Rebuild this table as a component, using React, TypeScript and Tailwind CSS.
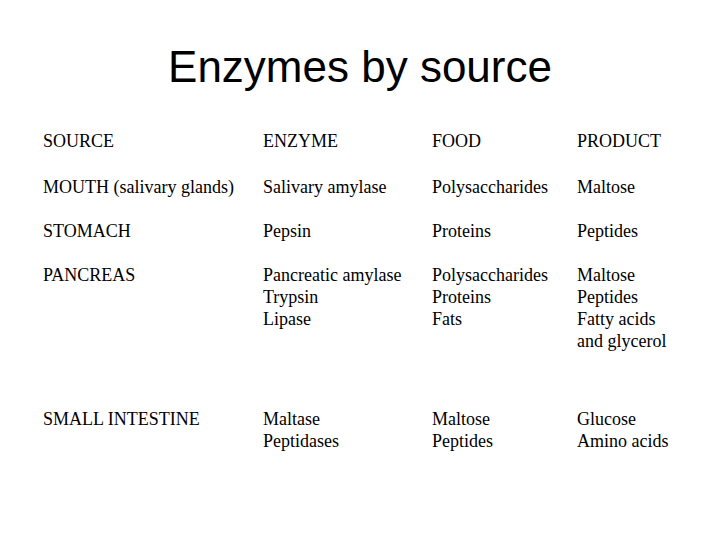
const rows: { h: string; cells: string[][] }[] = [
  { h: "h-[46px]", cells: [["SOURCE"], ["ENZYME"], ["FOOD"], ["PRODUCT"]] },
  { h: "h-[44px]", cells: [["MOUTH (salivary glands)"], ["Salivary amylase"], ["Polysaccharides"], ["Maltose"]] },
  { h: "h-[44px]", cells: [["STOMACH"], ["Pepsin"], ["Proteins"], ["Peptides"]] },
  {
    h: "h-[144px]",
    cells: [
      ["PANCREAS"],
      ["Pancreatic amylase", "Trypsin", "Lipase"],
      ["Polysaccharides", "Proteins", "Fats"],
      ["Maltose", "Peptides", "Fatty acids", "and glycerol"],
    ],
  },
  {
    h: "h-[66px]",
    cells: [["SMALL INTESTINE"], ["Maltase", "Peptidases"], ["Maltose", "Peptides"], ["Glucose", "Amino acids"]],
  },
];

export default function App() {
  return (
    <div className="w-[720px] h-[540px] bg-white text-black overflow-hidden">
      <h1 className="pt-[45px] text-center text-[44px] leading-[44px] font-['Liberation_Sans',Arial,sans-serif]">
        Enzymes by source
      </h1>
      <div className="mt-[41px] pl-[43px] font-['Liberation_Serif','Times_New_Roman',serif] text-[18px] leading-[22px]">
        {rows.map((row, i) => (
          <div key={i} className={`grid grid-cols-[220px_169px_145px_1fr] ${row.h}`}>
            {row.cells.map((lines, j) => (
              <div key={j}>
                {lines.map((l, k) => (
                  <div key={k}>{l}</div>
                ))}
              </div>
            ))}
          </div>
        ))}
      </div>
    </div>
  );
}
